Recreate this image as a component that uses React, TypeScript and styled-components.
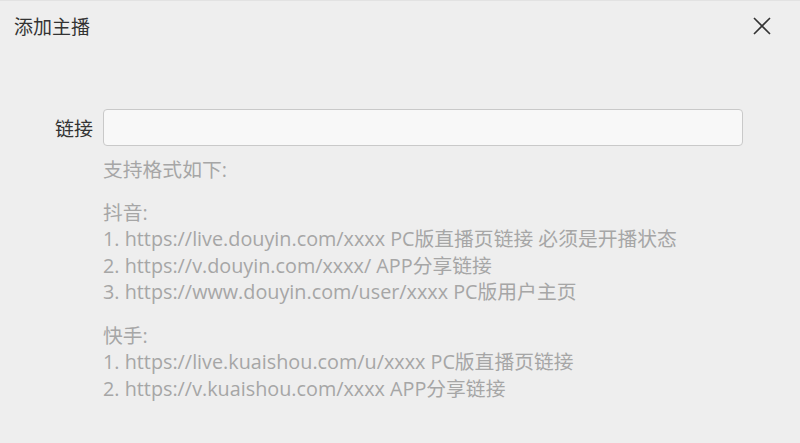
import React from 'react';
import styled, { createGlobalStyle } from 'styled-components';

const GlobalStyle = createGlobalStyle`
  html, body {
    margin: 0;
    padding: 0;
    height: 100%;
  }
  body {
    background: #eeeeee;
    font-family: "Open Sans", "Noto Sans CJK SC", sans-serif;
  }
  #root {
    height: 100%;
  }
`;

const Dialog = styled.div`
  height: 100vh;
  box-sizing: border-box;
  background: #eeeeee;
  border-top: 1px solid #e2e2e2;
  display: flex;
  flex-direction: column;
`;

const Header = styled.div`
  height: 49px;
  display: flex;
  align-items: center;
  justify-content: space-between;
  padding: 0 29px 0 14px;
`;

const Title = styled.div`
  font-size: 19px;
  color: #333333;
  font-family: "Noto Sans CJK SC", sans-serif;
`;

const CloseButton = styled.button`
  border: none;
  background: transparent;
  padding: 0;
  width: 18px;
  height: 18px;
  display: flex;
  align-items: center;
  justify-content: center;
  cursor: pointer;
`;

const Body = styled.div`
  padding: 59px 57px 0 55px;
`;

const FormRow = styled.div`
  display: grid;
  grid-template-columns: auto 1fr;
  column-gap: 10px;
`;

const Label = styled.label`
  height: 37px;
  display: flex;
  align-items: center;
  font-size: 19px;
  color: #333333;
  font-family: "Noto Sans CJK SC", sans-serif;
`;

const Input = styled.input`
  height: 37px;
  box-sizing: border-box;
  border: 1.5px solid #c9c9c9;
  border-radius: 4px;
  background: #f8f8f8;
  outline: none;
  font-size: 16px;
  padding: 0 10px;
`;

const Hints = styled.div`
  grid-column: 2;
  padding-top: 11px;
  color: #a6a6a6;
  font-size: 19.8px;
  line-height: 26.5px;
`;

const Group = styled.div<{ $gap: number }>`
  margin-top: ${p => p.$gap}px;
`;

const Line = styled.div`
  white-space: nowrap;
`;

const groups = [
  {
    name: '抖音:',
    lines: [
      '1. https://live.douyin.com/xxxx PC版直播页链接 必须是开播状态',
      '2. https://v.douyin.com/xxxx/ APP分享链接',
      '3. https://www.douyin.com/user/xxxx PC版用户主页',
    ],
  },
  {
    name: '快手:',
    lines: [
      '1. https://live.kuaishou.com/u/xxxx PC版直播页链接',
      '2. https://v.kuaishou.com/xxxx APP分享链接',
    ],
  },
];

const App: React.FC = () => {
  return (
    <>
      <GlobalStyle />
      <Dialog>
        <Header>
          <Title>添加主播</Title>
          <CloseButton aria-label="关闭">
            <svg width="18" height="18" viewBox="0 0 18 18">
              <path d="M1 1 L17 17 M17 1 L1 17" stroke="#333" strokeWidth="1.6" fill="none" />
            </svg>
          </CloseButton>
        </Header>
        <Body>
          <FormRow>
            <Label htmlFor="link">链接</Label>
            <Input id="link" />
            <Hints>
              <Line>支持格式如下:</Line>
              {groups.map((g, i) => (
                <Group key={g.name} $gap={i === 0 ? 16 : 17}>
                  <Line>{g.name}</Line>
                  {g.lines.map(l => (
                    <Line key={l}>{l}</Line>
                  ))}
                </Group>
              ))}
            </Hints>
          </FormRow>
        </Body>
      </Dialog>
    </>
  );
};

export default App;
